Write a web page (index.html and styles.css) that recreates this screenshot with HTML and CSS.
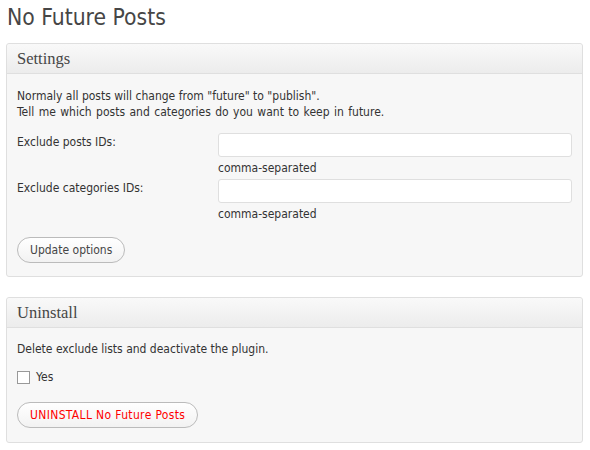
FILE: index.html
```html
<!DOCTYPE html>
<html>
<head>
<meta charset="utf-8">
<link rel="stylesheet" href="styles.css">
</head>
<body>
<div class="wrap">
  <h2 class="page-title">No Future Posts</h2>

  <div class="postbox">
    <h3 class="hndle">Settings</h3>
    <div class="inside">
      <p class="intro">Normaly all posts will change from "future" to "publish".<br><span class="wide">Tell me which posts and categories do you want to keep in future.</span></p>
      <div class="form-row">
        <label class="label">Exclude posts IDs:</label>
        <div class="field">
          <input type="text" class="text-input">
          <span class="hint">comma-separated</span>
        </div>
      </div>
      <div class="form-row">
        <label class="label">Exclude categories IDs:</label>
        <div class="field">
          <input type="text" class="text-input">
          <span class="hint">comma-separated</span>
        </div>
      </div>
      <button class="button">Update options</button>
    </div>
  </div>

  <div class="postbox">
    <h3 class="hndle">Uninstall</h3>
    <div class="inside last">
      <p class="intro">Delete exclude lists and deactivate the plugin.</p>
      <label class="check-row"><span class="checkbox"></span>Yes</label>
      <button class="button danger">UNINSTALL No Future Posts</button>
    </div>
  </div>
</div>
</body>
</html>
```

FILE: styles.css
```css
html, body {
  margin: 0;
  padding: 0;
  background: #ffffff;
}
body {
  font-family: "DejaVu Sans Condensed", "DejaVu Sans", sans-serif;
  font-size: 12px;
  color: #333333;
}
.wrap {
  padding: 4px 7px 0 6px;
  display: flex;
  flex-direction: column;
}
.page-title {
  margin: 0 0 13px 1px;
  font-family: "DejaVu Sans Condensed", "DejaVu Sans", sans-serif;
  font-weight: normal;
  font-size: 22.7px;
  line-height: 26px;
  color: #464646;
}
.postbox {
  border: 1px solid #dfdfdf;
  border-radius: 3px;
  background: #f7f7f7;
  margin-bottom: 20px;
}
.hndle {
  margin: 0;
  height: 29px;
  line-height: 30px;
  padding: 0 10px;
  font-family: "Liberation Serif", "DejaVu Serif", serif;
  font-weight: normal;
  font-size: 16.5px;
  color: #464646;
  background: linear-gradient(#f9f9f9, #ececec);
  border-bottom: 1px solid #dfdfdf;
  border-radius: 3px 3px 0 0;
}
.inside {
  padding: 14px 10px 13px 10px;
  display: flex;
  flex-direction: column;
  align-items: flex-start;
}
.inside.last {
  padding-top: 13px;
  padding-bottom: 14px;
}
.intro {
  margin: 0 0 13px 0;
  line-height: 16px;
}
.last .intro {
  margin-bottom: 12px;
}
.wide {
  word-spacing: 1px;
}
.form-row {
  display: flex;
  align-self: stretch;
  margin-bottom: 3px;
}
.label {
  width: 201px;
  padding-top: 1px;
  line-height: 16px;
}
.field {
  flex: 1;
  display: flex;
  flex-direction: column;
}
.text-input {
  height: 24px;
  box-sizing: border-box;
  border: 1px solid #dfdfdf;
  border-radius: 3px;
  background: #ffffff;
  margin: 0;
}
.hint {
  margin-top: 3px;
  line-height: 16px;
}
.button {
  margin-top: 12px;
  height: 26px;
  padding: 0 12px;
  border: 1px solid #bbbbbb;
  border-radius: 13px;
  background: linear-gradient(#ffffff, #f2f2f2);
  font-family: "DejaVu Sans Condensed", "DejaVu Sans", sans-serif;
  font-size: 12px;
  color: #464646;
  cursor: pointer;
}
.danger {
  color: #ff0000;
  margin-top: 17px;
  letter-spacing: 0.35px;
}
.check-row {
  display: flex;
  align-items: center;
  gap: 6px;
  line-height: 16px;
}
.checkbox {
  width: 11px;
  height: 11px;
  border: 1px solid #999999;
  background: #ffffff;
  display: inline-block;
}
```
